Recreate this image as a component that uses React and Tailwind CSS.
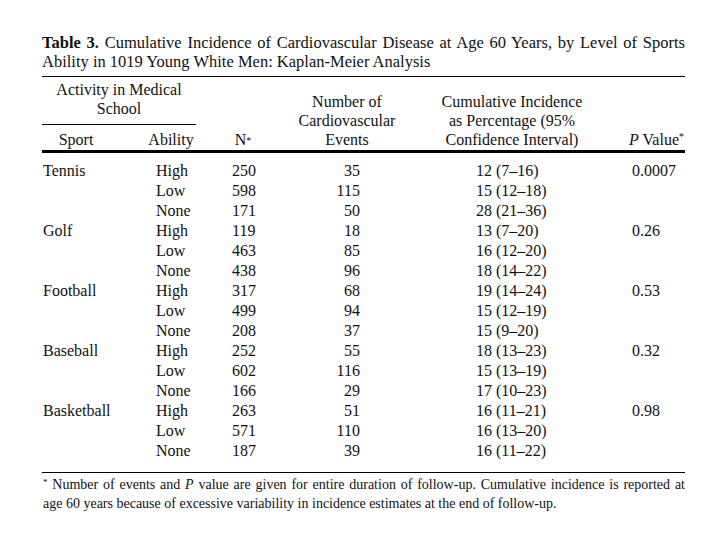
const ROWS = [
  { sport: 'Tennis', p: '0.0007', data: [['High', '250', '35', '12 (7–16)'], ['Low', '598', '115', '15 (12–18)'], ['None', '171', '50', '28 (21–36)']] },
  { sport: 'Golf', p: '0.26', data: [['High', '119', '18', '13 (7–20)'], ['Low', '463', '85', '16 (12–20)'], ['None', '438', '96', '18 (14–22)']] },
  { sport: 'Football', p: '0.53', data: [['High', '317', '68', '19 (14–24)'], ['Low', '499', '94', '15 (12–19)'], ['None', '208', '37', '15 (9–20)']] },
  { sport: 'Baseball', p: '0.32', data: [['High', '252', '55', '18 (13–23)'], ['Low', '602', '116', '15 (13–19)'], ['None', '166', '29', '17 (10–23)']] },
  { sport: 'Basketball', p: '0.98', data: [['High', '263', '51', '16 (11–21)'], ['Low', '571', '110', '16 (13–20)'], ['None', '187', '39', '16 (11–22)']] },
];

const FONT = "font-['Liberation_Serif','Times_New_Roman',serif]";

export default function App() {
  return (
    <div className={`w-[720px] h-[540px] bg-white text-[#111] ${FONT}`}>
      <div className="ml-[42px] w-[643px] pt-[33px]">
        {/* Title */}
        <div className="text-[16.5px] leading-[19px]">
          <div className="[text-align-last:justify]"><span className="font-bold">Table 3.</span> Cumulative Incidence of Cardiovascular Disease at Age 60 Years, by Level of Sports</div>
          <div>Ability in 1019 Young White Men: Kaplan-Meier Analysis</div>
        </div>
        <div className="mt-[5px] h-px bg-black" />

        {/* Column headers */}
        <div className="flex items-end text-[16px] leading-[19px] pt-[3px] pb-px">
          <div className="w-[154px]">
            <div className="text-center">Activity in Medical</div>
            <div className="text-center">School</div>
            <div className="mt-[6px] h-px bg-black" />
            <div className="mt-[5px] flex">
              <div className="w-[68px] text-center">Sport</div>
              <div className="ml-auto w-[50px] text-center">Ability</div>
            </div>
          </div>
          <div className="w-[94px] text-center">N<sup className="text-[10px] relative -top-px">*</sup></div>
          <div className="w-[114px] text-center">
            <div>Number of</div>
            <div>Cardiovascular</div>
            <div>Events</div>
          </div>
          <div className="w-[216px] text-center">
            <div>Cumulative Incidence</div>
            <div>as Percentage (95%</div>
            <div>Confidence Interval)</div>
          </div>
          <div className="flex-1 text-right pr-px"><i>P</i> Value<sup className="text-[10px]">*</sup></div>
        </div>
        <div className="h-[3px] bg-black" />

        {/* Body */}
        <div className="pt-[8px] text-[16px] leading-[20px]">
          {ROWS.map(g => g.data.map(([ability, n, events, ci], i) => (
            <div key={g.sport + ability} className="flex h-[20px]">
              <div className="w-[114px] pl-px">{i === 0 ? g.sport : ''}</div>
              <div className="w-[76px]">{ability}</div>
              <div className="w-[68px]">{n}</div>
              <div className="w-[60px] text-right">{events}</div>
              <div className="w-[116px]" />
              <div className="w-[156px]">{ci}</div>
              <div className="flex-1">{i === 0 ? g.p : ''}</div>
            </div>
          )))}
        </div>
        <div className="mt-[11px] h-px bg-black" />

        {/* Footnote */}
        <div className="pt-[2px] pl-px text-[14px] leading-[19px]">
          <div className="[text-align-last:justify]"><sup className="text-[9px]">*</sup> Number of events and <i>P</i> value are given for entire duration of follow-up. Cumulative incidence is reported at</div>
          <div>age 60 years because of excessive variability in incidence estimates at the end of follow-up.</div>
        </div>
      </div>
    </div>
  );
}
